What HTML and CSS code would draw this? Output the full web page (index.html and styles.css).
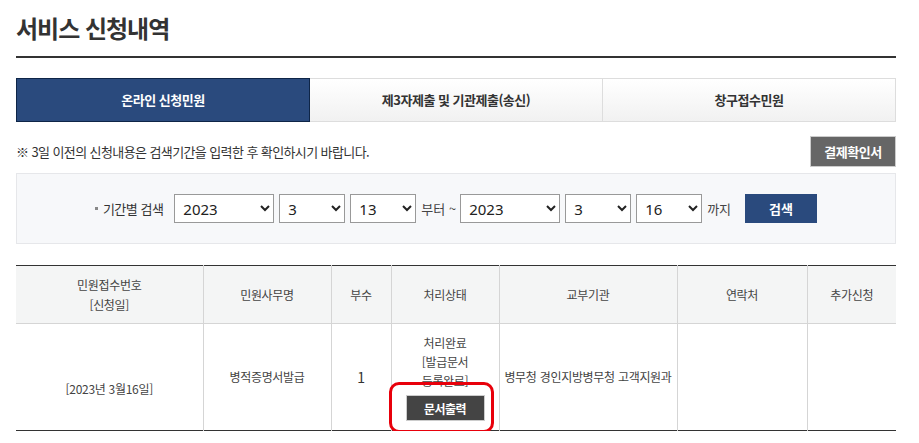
FILE: index.html
```html
<!DOCTYPE html>
<html lang="ko">
  <head>
    <meta charset="utf-8" />
    <title>서비스 신청내역</title>
    <link rel="stylesheet" href="styles.css">
  </head>

  <body>
    <div class="wrap">
      <h1 class="title">서비스 신청내역</h1>

      <ul class="tabs">
        <li class="on"><a href="#">온라인 신청민원</a></li>
        <li><a href="#">제3자제출 및 기관제출(송신)</a></li>
        <li><a href="#">창구접수민원</a></li>
      </ul>

      <div class="notice">
        <p>※ 3일 이전의 신청내용은 검색기간을 입력한 후 확인하시기 바랍니다.</p>
        <button type="button" class="btn-gray">결제확인서</button>
      </div>

      <form class="search">
        <span class="label">기간별 검색</span>
        <select class="sel-year"><option>2023</option></select>
        <select class="sel-day"><option>3</option></select>
        <select class="sel-day"><option>13</option></select>
        <span class="txt">부터 ~</span>
        <select class="sel-year"><option>2023</option></select>
        <select class="sel-day"><option>3</option></select>
        <select class="sel-day"><option>16</option></select>
        <span class="txt">까지</span>
        <button type="button" class="btn-blue">검색</button>
      </form>

      <table class="list">
        <colgroup>
          <col style="width:187px" />
          <col style="width:128px" />
          <col style="width:60px" />
          <col style="width:108px" />
          <col style="width:178px" />
          <col style="width:130px" />
          <col />
        </colgroup>
        <thead>
          <tr>
            <th>민원접수번호<br />[신청일]</th>
            <th>민원사무명</th>
            <th>부수</th>
            <th>처리상태</th>
            <th>교부기관</th>
            <th>연락처</th>
            <th>추가신청</th>
          </tr>
        </thead>
        <tbody>
          <tr>
            <td><span class="no"></span>[2023년 3월16일]</td>
            <td>병적증명서발급</td>
            <td class="num">1</td>
            <td class="state">
              처리완료<br />[발급문서<br />등록완료]
              <button type="button" class="btn-print">문서출력</button>
              <span class="mark"></span>
            </td>
            <td class="nowrap">병무청 경인지방병무청 고객지원과</td>
            <td></td>
            <td></td>
          </tr>
        </tbody>
      </table>
    </div>
  </body>
</html>
```

FILE: styles.css
```css
body {
  margin: 0;
  font-family: "Noto Sans CJK KR", "Noto Sans", sans-serif;
  font-size: 13px;
  color: #333;
}

.wrap {
  width: 880px;
  padding-left: 16px;
}

.title {
  margin: 0;
  padding: 12px 0;
  font-size: 24px;
  line-height: 32px;
  font-weight: bold;
  color: #333;
  letter-spacing: -1px;
  border-bottom: 2px solid #333;
}

/* 탭 */
.tabs {
  display: flex;
  margin: 20px 0 0;
  padding: 0;
  list-style: none;
}

.tabs li {
  flex: 1;
  border: 1px solid #ddd;
  border-left: 0;
  background: linear-gradient(#fff, #f1f1f1);
}

.tabs li:first-child {
  border-left: 1px solid #ddd;
}

.tabs a {
  display: block;
  height: 42px;
  line-height: 42px;
  text-align: center;
  font-weight: bold;
  color: #333;
  text-decoration: none;
  letter-spacing: -0.5px;
}

.tabs li.on {
  background: #2a4a7d;
  border-color: #0e2547;
}

.tabs li.on a {
  color: #fff;
}

/* 안내문 */
.notice {
  display: flex;
  align-items: center;
  justify-content: space-between;
  margin-top: 14px;
}

.notice p {
  margin: 0;
  letter-spacing: -0.6px;
}

.btn-gray {
  width: 86px;
  height: 31px;
  border: 1px solid #ccc;
  background: #666;
  color: #fff;
  font-family: inherit;
  font-size: 13px;
  font-weight: bold;
  letter-spacing: -0.5px;
}

/* 검색 */
.search {
  display: flex;
  align-items: center;
  justify-content: center;
  height: 69px;
  margin-top: 6px;
  border: 1px solid #e6e7ea;
  background: #f7f8fa;
}

.search .label {
  margin-right: 11px;
  color: #333;
  letter-spacing: -0.5px;
}

.search .label::before {
  content: "";
  display: inline-block;
  width: 3px;
  height: 3px;
  margin: 0 5px 3px 0;
  background: #888;
  vertical-align: middle;
}

.search select {
  height: 29px;
  margin-right: 5px;
  padding: 0 4px;
  border: 1px solid #999;
  border-radius: 0;
  background: #fff;
  font-family: "Noto Sans", sans-serif;
  font-size: 15px;
  color: #222;
}

.sel-year {
  width: 100px;
}

.sel-day {
  width: 66px;
}

.search .txt {
  margin-right: 4px;
  color: #444;
}

.btn-blue {
  width: 72px;
  height: 29px;
  margin-left: 10px;
  border: 0;
  background: #2a4a7d;
  color: #fff;
  font-family: inherit;
  font-size: 13px;
  font-weight: bold;
}

/* 목록 */
.list {
  width: 880px;
  margin-top: 21px;
  border-collapse: collapse;
  table-layout: fixed;
  border-top: 1px solid #333;
  border-bottom: 1px solid #333;
}

.list th,
.list td {
  padding: 0;
  border-left: 1px solid #d5d5d5;
  text-align: center;
  font-size: 12px;
  font-weight: normal;
  color: #444;
  line-height: 20px;
  letter-spacing: -0.3px;
}

.list th:first-child,
.list td:first-child {
  border-left: 0;
}

.list th {
  height: 57px;
  background: #f4f5f5;
  border-bottom: 1px solid #d5d5d5;
}

.list td {
  height: 106px;
}

.list .no {
  display: block;
  height: 24px;
}

.list td.num {
  font-size: 14px;
  color: #333;
}

.list td.nowrap {
  white-space: nowrap;
}

.list td.state {
  position: relative;
  line-height: 19px;
}

.btn-print {
  display: block;
  width: 79px;
  height: 26px;
  margin: 5px auto 0;
  border: 1px solid #ccc;
  background: #444;
  color: #fff;
  font-family: inherit;
  font-size: 12px;
  font-weight: bold;
  letter-spacing: -0.5px;
}

.mark {
  position: absolute;
  left: -3px;
  bottom: -3px;
  width: 99px;
  height: 45px;
  border: 3px solid #e8000b;
  border-radius: 10px;
}
```
